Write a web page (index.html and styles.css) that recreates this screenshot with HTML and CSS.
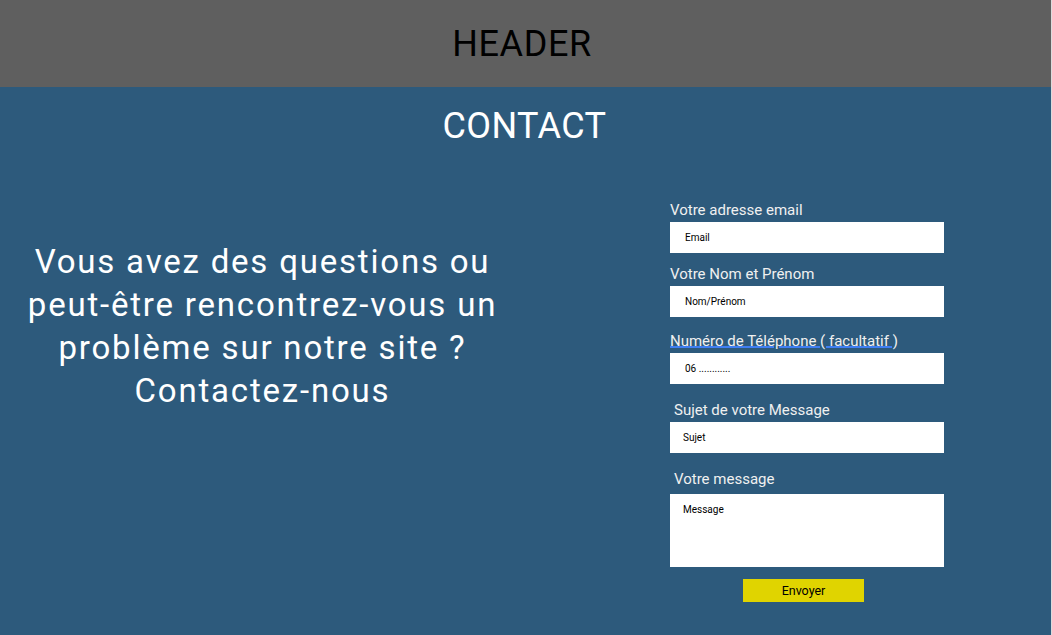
FILE: index.html
```html
<!DOCTYPE html>
<html lang="fr">
<head>
<meta charset="utf-8">
<title>Contact</title>
<link rel="stylesheet" href="styles.css">
</head>
<body>
<div class="page">
  <header class="header">HEADER</header>
  <main class="main">
    <h1 class="title">CONTACT</h1>
    <div class="row">
      <div class="intro">
        <p class="intro-text">Vous avez des questions ou<br>peut-être rencontrez-vous un<br>problème sur notre site ?<br>Contactez-nous</p>
      </div>
      <form class="form">
        <div class="field">
          <label class="label">Votre adresse email</label>
          <input class="input" type="text" placeholder="Email">
        </div>
        <div class="field field-2">
          <label class="label">Votre Nom et Prénom</label>
          <input class="input" type="text" placeholder="Nom/Prénom">
        </div>
        <div class="field field-3">
          <label class="label label-underlined">Numéro de Téléphone ( facultatif )</label>
          <input class="input" type="text" placeholder="06 ............">
        </div>
        <div class="field field-4">
          <label class="label label-indent">Sujet de votre Message</label>
          <input class="input input-tight" type="text" placeholder="Sujet">
        </div>
        <div class="field field-5">
          <label class="label label-indent label-msg">Votre message</label>
          <textarea class="textarea" placeholder="Message"></textarea>
        </div>
        <button class="button" type="button">Envoyer</button>
      </form>
    </div>
  </main>
</div>
</body>
</html>
```
FILE: styles.css
```css
html, body {
  margin: 0;
  padding: 0;
}
body {
  background: #dcdcdc;
  font-family: Roboto, "Liberation Sans", Arial, sans-serif;
}
.page {
  margin-right: 1px;
  min-height: 100vh;
  display: flex;
  flex-direction: column;
}
.header {
  height: 87px;
  background: #5f5f5f;
  color: #000;
  font-size: 36px;
  letter-spacing: 0.6px;
  padding-right: 7px;
  display: flex;
  align-items: center;
  justify-content: center;
}
.main {
  flex: 1;
  background: #2d5a7c;
  padding-top: 18px;
}
.title {
  margin: 0;
  font-weight: 400;
  font-size: 36px;
  line-height: 42px;
  letter-spacing: 0.4px;
  padding-right: 2px;
  color: #fff;
  text-align: center;
}
.row {
  display: flex;
  margin-top: 55px;
}
.intro {
  width: 525px;
  padding-top: 38px;
}
.intro-text {
  margin: 0;
  font-size: 33px;
  line-height: 43px;
  letter-spacing: 1.8px;
  color: #fff;
  text-align: center;
}
.form {
  margin-left: 145px;
  width: 274px;
  display: flex;
  flex-direction: column;
}
.field {
  display: flex;
  flex-direction: column;
}
.field-2 { margin-top: 13px; }
.field-3 { margin-top: 16px; }
.field-4 { margin-top: 18px; }
.field-5 { margin-top: 18px; }
.label {
  font-size: 15px;
  line-height: 17px;
  color: #f0f0f0;
  margin-bottom: 3px;
}
.label-underlined {
  align-self: flex-start;
  text-decoration: underline;
  text-decoration-color: #3f7ef2;
  text-decoration-thickness: 2px;
  text-underline-offset: 0px;
}
.label-indent { padding-left: 4px; }
.label-msg { margin-bottom: 6px; }
.input, .textarea {
  box-sizing: border-box;
  width: 274px;
  border: none;
  outline: none;
  background: #fff;
  font-family: Roboto, "Liberation Sans", Arial, sans-serif;
  font-size: 10px;
  color: #000;
  margin: 0;
}
.input {
  height: 31px;
  padding: 0 15px;
}
.input-tight { padding: 0 13px; }
.textarea {
  height: 73px;
  padding: 10px 13px;
  resize: none;
  display: block;
}
.input::placeholder, .textarea::placeholder {
  color: #000;
  opacity: 1;
}
.button {
  margin-top: 12px;
  margin-left: 73px;
  width: 121px;
  height: 23px;
  border: none;
  background: #e0d400;
  color: #000;
  font-family: Roboto, "Liberation Sans", Arial, sans-serif;
  font-size: 12.5px;
  padding: 0;
  align-self: flex-start;
}
```
